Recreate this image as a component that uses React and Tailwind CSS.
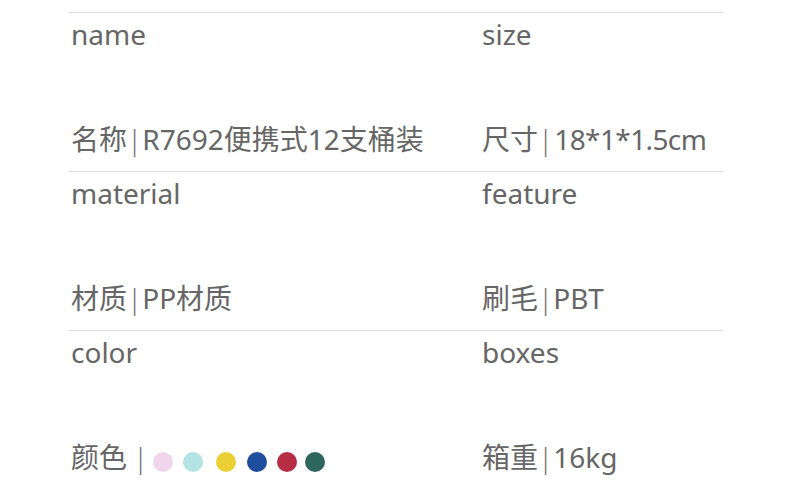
const ROWS = [
  [
    { label: 'name', a: '名称', b: 'R7692便携式12支桶装', sep: 'mx-0' },
    { label: 'size', a: '尺寸', b: '18*1*1.5cm', sep: 'mr-[1px]', tight: true },
  ],
  [
    { label: 'material', a: '材质', b: 'PP材质', sep: 'mx-0' },
    { label: 'feature', a: '刷毛', b: 'PBT', sep: 'mx-0' },
  ],
  [
    { label: 'color', a: '颜色', b: '', sep: 'ml-[6px]', dots: true },
    { label: 'boxes', a: '箱重', b: '16kg', sep: 'mx-0' },
  ],
]

const DOTS = [
  { c: 'bg-[#f1d5ec]', m: 'ml-[5px]' },
  { c: 'bg-[#b3e3e3]', m: 'ml-[10px]' },
  { c: 'bg-[#ebd035]', m: 'ml-[13px]' },
  { c: 'bg-[#1e4d9e]', m: 'ml-[11px]' },
  { c: 'bg-[#b62d44]', m: 'ml-[10px]' },
  { c: 'bg-[#2d665c]', m: 'ml-[8px]' },
]

function Cell({ label, a, b, sep, dots, tight }) {
  return (
    <div className="pt-[7px] pl-[3px]">
      <div className="leading-[28px]">{label}</div>
      <div className="mt-[77px] flex items-start leading-[28px] whitespace-nowrap">
        <span>{a}</span>
        <span className={`font-light text-[#777] ${sep}`}>|</span>
        {b && <span className={tight ? 'tracking-[-0.6px]' : ''}>{b}</span>}
        {dots && (
          <div className="mt-[9px] flex">
            {DOTS.map((d, i) => (
              <span key={i} className={`h-[20px] w-[20px] rounded-full ${d.c} ${d.m}`} />
            ))}
          </div>
        )}
      </div>
    </div>
  )
}

export default function App() {
  return (
    <div
      className="h-[487px] w-[787px] overflow-hidden bg-white pt-[12px] pl-[68px] text-[28px] text-[#666]"
      style={{ fontFamily: '"Noto Sans", "Noto Sans CJK SC", sans-serif' }}
    >
      <div className="w-[655px]">
        {ROWS.map((row, i) => (
          <div key={i} className="grid h-[159px] grid-cols-[411px_1fr] border-t border-[#dedede]">
            {row.map((cell) => (
              <Cell key={cell.label} {...cell} />
            ))}
          </div>
        ))}
      </div>
    </div>
  )
}
